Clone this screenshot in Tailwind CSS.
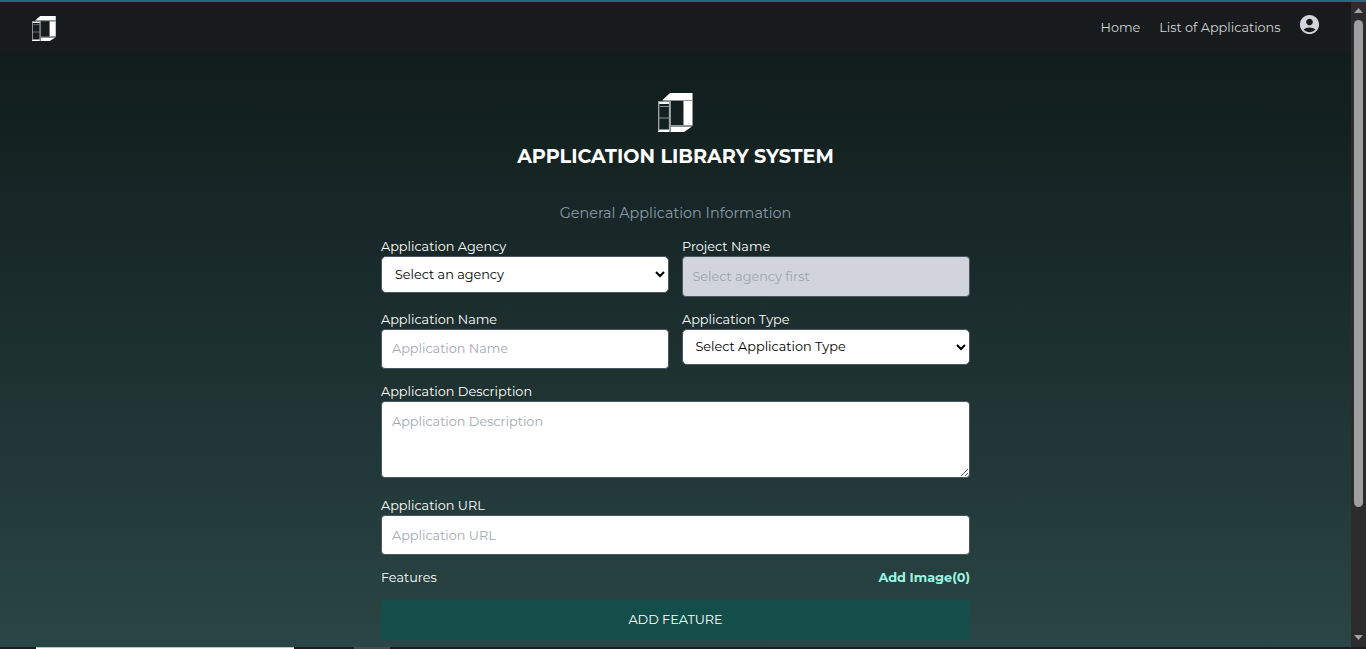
<!DOCTYPE html>
<html lang="en">
<head>
<meta charset="utf-8">
<title>Application Library System</title>
<script src="https://cdn.jsdelivr.net/npm/@tailwindcss/browser@4"></script>
</head>
<body class="h-[649px] overflow-hidden bg-[#1d1b1f] font-[Montserrat,Inter,sans-serif] text-[12.8px] leading-[22px] text-white">
<svg class="hidden">
  <symbol id="logo" viewBox="0 0 35 39">
    <path fill="#fff" d="M4.500 7 12 0h23v7zM26 8h9v24h-9zM13 33.500h21L26 39H13zM0 8.500h12V11H0zM0 36.500h12V39H0z"/>
    <path fill="none" stroke="#a3a8a8" stroke-width="1.300" d="M.7 9v29M11.500 8v31"/>
    <path fill="none" stroke="#8f9696" d="M12.500 8v31M25.500 8v24.500M4.500 7.500H35M12.500 32.500H35M34.500 0v33"/>
    <path fill="none" stroke="#8d9494" d="M2 13.500h9M1 25h11"/>
  </symbol>
</svg>
<div class="flex h-[647px] flex-col border-t-2 border-[#157078]">
  <div class="flex min-h-0 flex-1">
    <div class="flex flex-1 flex-col bg-linear-to-b from-[#0f1919] to-[#2a4545]">
      <nav class="flex h-[51px] shrink-0 items-center justify-between bg-[#181b1b] pr-[30.500px] pl-8 text-[#d1d5db]">
        <svg class="mt-px h-[25px] w-6" viewBox="0 0 35 39" preserveAspectRatio="none"><use href="#logo" width="35" height="39"/></svg>
        <div class="flex items-center">
          <a class="mr-[19px] whitespace-nowrap">Home</a>
          <a class="mr-[17px] whitespace-nowrap">List of Applications</a>
          <svg class="-mt-[7px] size-[23px]" viewBox="0 0 24 24" fill="#d1d5db"><path d="M12 2C6.480 2 2 6.480 2 12s4.480 10 10 10 10-4.480 10-10S17.520 2 12 2zm0 4c1.930 0 3.500 1.570 3.500 3.500S13.930 13 12 13s-3.500-1.570-3.500-3.500S10.070 6 12 6zm0 14c-2.030 0-4.430-.82-6.140-2.880C7.550 15.800 9.680 15 12 15s4.450.8 6.140 2.120C16.430 19.180 14.030 20 12 20z"/></svg>
        </div>
      </nav>
      <main class="ml-[381px] flex w-[589px] flex-col">
        <svg class="mt-10 ml-[277px] h-[39px] w-[35px]"><use href="#logo"/></svg>
        <h1 class="mt-[10px] flex h-7 items-center justify-center whitespace-nowrap text-[19.2px] font-bold"><span>APPLICATION LIBRARY SYSTEM</span></h1>
        <h2 class="mt-[33px] flex h-5 items-center justify-center whitespace-nowrap text-[14.4px] text-[#8b9aa8]"><span>General Application Information</span></h2>
        <div class="mt-[13px] grid grid-cols-2 gap-x-[13px]">
          <div class="h-[73px]">
            <label class="block h-5">Application Agency</label>
            <div class="flex h-[37px] items-center justify-between rounded-[5px] border border-[#4b5563] bg-white pr-[3px] pl-[13px] text-black"><span class="mt-px">Select an agency</span><svg class="h-[7px] w-[10px]" viewBox="0 0 10 7" fill="none" stroke="#000" stroke-width="2"><path d="m1 1 4 4 4-4"/></svg></div>
          </div>
          <div class="h-[73px]">
            <label class="block h-5">Project Name</label>
            <div class="flex h-[41px] items-center rounded-[4px] border border-[#4b5563] bg-[#d1d5db] pl-[9.500px] text-[#9ca3af]"><span class="mt-px">Select agency first</span></div>
          </div>
          <div class="h-[72px]">
            <label class="block h-5">Application Name</label>
            <div class="flex h-10 items-center rounded-[4px] border border-[#4b5563] bg-white pl-[10px] text-[#a3a8b3]"><span>Application Name</span></div>
          </div>
          <div class="h-[72px]">
            <label class="block h-5">Application Type</label>
            <div class="flex h-9 items-center justify-between rounded-[5px] border border-[#4b5563] bg-white pr-[3px] pl-[12.500px] text-black"><span>Select Application Type</span><svg class="h-[7px] w-[10px]" viewBox="0 0 10 7" fill="none" stroke="#000" stroke-width="2"><path d="m1 1 4 4 4-4"/></svg></div>
          </div>
        </div>
        <div class="h-[114px]">
          <label class="block h-5">Application Description</label>
          <div class="flex h-[77px] items-end justify-between rounded-[4px] border border-[#4b5563] bg-white pl-[10px] text-[#a3a8b3]"><span class="mb-[44px]">Application Description</span><svg class="size-[9px]" viewBox="0 0 9 9" stroke="#555" stroke-width="1"><path d="M1 8 8 1M5 8l3-3"/></svg></div>
        </div>
        <div class="h-[72px]">
          <label class="block h-5">Application URL</label>
          <div class="flex h-10 items-center rounded-[4px] border border-[#4b5563] bg-white pl-[10px] text-[#a3a8b3]"><span class="mt-0.5">Application URL</span></div>
        </div>
        <div class="flex h-[33px] justify-between"><span>Features</span><span class="font-bold text-[#99f6e4]">Add Image(0)</span></div>
        <div class="flex h-10 items-center justify-center rounded-[2px] bg-[#134e4a]"><span>ADD FEATURE</span></div>
      </main>
    </div>
    <div class="flex w-[15px] flex-col items-center bg-[#2c2c2c]">
      <svg class="mt-1.5 h-[5px] w-[9px]" viewBox="0 0 9 5" fill="#a0a0a0"><path d="M0 5h9L4.500 0z"/></svg>
      <div class="mt-[7px] h-[487px] w-[9px] rounded-full bg-[#9f9f9f]"></div>
      <svg class="mt-auto mb-[7px] h-[5px] w-[9px]" viewBox="0 0 9 5" fill="#a0a0a0"><path d="M0 0h9L4.500 5z"/></svg>
    </div>
  </div>
</div>
<div class="flex h-0.5 bg-[#1d1b1f]">
  <div class="ml-9 w-[258px] border-t border-[#b9c5c5] bg-white"></div>
  <div class="ml-[60px] w-9 bg-[#4b4a4d]"></div>
</div>
</body>
</html>
